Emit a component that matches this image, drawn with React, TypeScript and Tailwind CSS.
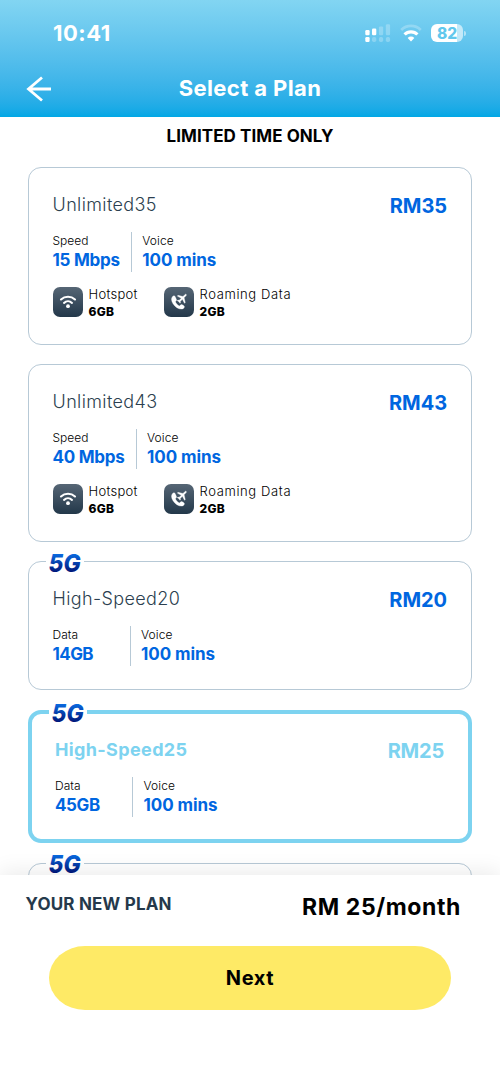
import clsx from "clsx";

interface Stat {
  label: string;
  value: string;
  spacing: string;
}

interface Plan {
  name: string;
  price: string;
  stat: Stat;
  is5G?: boolean;
  selected?: boolean;
  addOns?: boolean;
}

const plans: Plan[] = [
  {
    name: "Unlimited35",
    price: "RM35",
    stat: { label: "Speed", value: "15 Mbps", spacing: "tracking-[-0.25px]" },
    addOns: true,
  },
  {
    name: "Unlimited43",
    price: "RM43",
    stat: { label: "Speed", value: "40 Mbps", spacing: "tracking-[-0.25px]" },
    addOns: true,
  },
  {
    name: "High-Speed20",
    price: "RM20",
    stat: { label: "Data", value: "14GB", spacing: "tracking-[-0.6px]" },
    is5G: true,
  },
  {
    name: "High-Speed25",
    price: "RM25",
    stat: { label: "Data", value: "45GB", spacing: "tracking-[-0.4px]" },
    is5G: true,
    selected: true,
  },
];

function SignalIcon() {
  return (
    <svg width="26" height="18" viewBox="0 0 26 18" fill="white">
      <rect x="0.3" y="6" width="4.3" height="5.2" rx="1.2" />
      <rect x="7" y="4.6" width="4.3" height="6.6" rx="1.2" />
      <rect x="13.9" y="2.4" width="4.3" height="8.8" rx="1.2" opacity="0.25" />
      <rect x="20.8" y="0.2" width="4.3" height="11" rx="1.2" opacity="0.25" />
      <rect x="0.3" y="13" width="4.3" height="5" rx="1.2" />
      <rect x="7" y="13" width="4.3" height="5" rx="1.8" opacity="0.25" />
      <rect x="13.9" y="13" width="4.3" height="5" rx="1.8" opacity="0.25" />
      <rect x="20.8" y="13" width="4.3" height="5" rx="1.8" opacity="0.25" />
    </svg>
  );
}

function StatusWifiIcon() {
  return (
    <svg width="22" height="18" viewBox="0 0 22 18" fill="none" stroke="white">
      <path d="M1.2 6a13.8 13.8 0 0 1 19.6 0" strokeWidth="2.7" opacity="0.25" />
      <path d="M4.6 10.5a8.9 8.9 0 0 1 12.8 0" strokeWidth="3.2" />
      <path d="M11 17.4l-3.3-3.4a4.6 4.6 0 0 1 6.6 0z" fill="white" stroke="none" />
    </svg>
  );
}

function Battery() {
  return (
    <div className="flex items-center">
      <div className="flex h-[18px] w-8 items-center justify-center rounded-[6px] bg-linear-to-r from-white from-[82%] to-white/60 to-[82%] pt-px text-[15.5px] leading-none font-extrabold text-[#62c8ed]">
        82
      </div>
      <div className="ml-px h-[5px] w-[2px] rounded-r-full bg-white/50" />
    </div>
  );
}

function Logo5G() {
  return (
    <svg width="36" height="22" viewBox="0 0 36 22" overflow="visible">
      <defs>
        <linearGradient id="logo5g" x1="0" y1="0" x2="0" y2="1">
          <stop offset="0.2" stopColor="#0a6ae0" />
          <stop offset="0.78" stopColor="#001a7d" />
        </linearGradient>
      </defs>
      <text
        x="0.6"
        y="20"
        textLength="32"
        lengthAdjust="spacingAndGlyphs"
        fill="url(#logo5g)"
        className="text-[25px] font-extrabold italic"
      >
        5G
      </text>
    </svg>
  );
}

function HotspotIcon() {
  return (
    <svg width="18" height="14" viewBox="0 0 18 14" fill="none" stroke="white" strokeWidth="2.1" strokeLinecap="round">
      <path d="M2 4.5a10.2 10.2 0 0 1 14 0" />
      <path d="M5 7.9a5.8 5.8 0 0 1 8 0" />
      <circle cx="9" cy="11.2" r="1.9" fill="white" stroke="none" />
    </svg>
  );
}

// handset with a small plane over its upper right corner
function RoamingIcon() {
  return (
    <svg width="18" height="18" viewBox="0 0 18 18" fill="white" stroke="white" strokeLinejoin="round">
      <path
        d="M5 3.3C4.3 2.4 3.4 2.6 2.6 3.4 1 5 1.1 7.6 3 10.7c2.300 3.500 5.600 5.600 8.600 5.400 1.500-.1 2.600-1 2.800-2.100.1-.7-.2-1.100-.8-1.500l-1.700-.9c-.6-.3-1.100-.1-1.500.4l-.8 1C7.700 12.300 6.200 10.700 5.400 8.800l.9-1c.4-.5.4-.9.1-1.500z"
        strokeWidth="0.3"
      />
      <g transform="translate(12.400 5.200) rotate(45) scale(0.54) translate(-11.500 -12)">
        <path
          d="M21 16v-2l-8-5V3.500c0-.83-.67-1.500-1.500-1.500S10 2.670 10 3.500V9l-8 5v2l8-2.500V19l-2 1.500V22l3.500-1 3.500 1v-1.500L13 19v-5.500l8 2.500z"
          strokeWidth="0.6"
        />
      </g>
    </svg>
  );
}

function AddOn({ icon, label, value }: { icon: React.ReactNode; label: string; value: string }) {
  return (
    <div className="flex items-center gap-[6px]">
      <div className="flex size-[30px] items-center justify-center rounded-[7px] bg-linear-to-b from-[#566675] to-[#23384a]">
        {icon}
      </div>
      <div className="pt-[2px]">
        <p className="text-[13px] leading-[18px] font-light">{label}</p>
        <p className="text-[12px] leading-[18px] font-extrabold tracking-[0.3px]">{value}</p>
      </div>
    </div>
  );
}

function PlanCard({ plan }: { plan: Plan }) {
  const { name, price, stat, is5G, selected, addOns } = plan;

  return (
    <div
      className={clsx(
        "relative shrink-0 rounded-[13px] pr-6",
        selected
          ? "mt-px h-[133px] border-4 border-[#7dd3f0] pt-[21px] pl-[23px]"
          : "border border-[#b7c9d6] pt-[22px] pl-[23.5px]",
        !selected && (addOns ? "h-[178px]" : "h-[129px]"),
      )}
    >
      {is5G && (
        <div className={clsx("absolute left-[17px] bg-white pl-[2px]", selected ? "-top-[12px]" : "-top-[10px]")}>
          <Logo5G />
        </div>
      )}
      <div className="flex h-[31px] justify-between">
        <h2
          className={clsx(
            "pt-px text-[18px] leading-7",
            selected
              ? "font-bold tracking-[0.36px] text-[#7dd3f0]"
              : "font-light tracking-[0.38px] text-[#2c3f50]",
          )}
        >
          {name}
        </h2>
        <p
          className={clsx(
            "pt-[2px] text-[20px] leading-7 font-bold",
            selected ? "tracking-[-0.2px] text-[#7dd3f0]" : "tracking-[-0.05px] text-[#0066e0]",
          )}
        >
          {price}
        </p>
      </div>
      <div className="mt-[11px] flex h-10">
        <div className="min-w-[78px] border-r border-[#b7c9d6] pr-[11px]">
          <p className="text-[12px] leading-[17px] font-light">{stat.label}</p>
          <p className={clsx("text-[17px] leading-[22px] font-bold text-[#0066e0]", stat.spacing)}>{stat.value}</p>
        </div>
        <div className="pl-[10.5px]">
          <p className="text-[12px] leading-[17px] font-light tracking-[0.1px]">Voice</p>
          <p className="text-[17px] leading-[22px] font-bold tracking-[-0.07px] text-[#0066e0]">100 mins</p>
        </div>
      </div>
      {addOns && (
        <div className="mt-[11px] flex">
          <div className="w-[111px] tracking-[0.3px]">
            <AddOn icon={<HotspotIcon />} label="Hotspot" value="6GB" />
          </div>
          <div className="tracking-[0.63px]">
            <AddOn icon={<RoamingIcon />} label="Roaming Data" value="2GB" />
          </div>
        </div>
      )}
    </div>
  );
}

export default function App() {
  return (
    <div className="flex h-[1082px] w-[500px] flex-col overflow-hidden bg-white font-['Inter','Liberation_Sans',sans-serif] text-black">
      <header className="h-[117px] shrink-0 bg-linear-to-b from-[#82d5f2] to-[#00a7e5] text-white">
        <div className="flex h-[66px] items-center justify-between pr-[34px] pl-[53px]">
          <span className="text-[22px] leading-none font-bold tracking-[0.5px]">10:41</span>
          <div className="flex items-center gap-[9px]">
            <SignalIcon />
            <StatusWifiIcon />
            <Battery />
          </div>
        </div>
        <div className="grid h-[45px] grid-cols-[52px_1fr_52px] items-center">
          <button aria-label="Back" className="pl-[26px]">
            <svg width="26" height="26" viewBox="0 0 26 26" fill="none" stroke="white" strokeWidth="2.8">
              <path d="M25 13H2.5M16 1.5L2.5 13L16 24.5" />
            </svg>
          </button>
          <h1 className="text-center text-[22px] font-bold tracking-[0.4px]">Select a Plan</h1>
        </div>
      </header>

      <main className="flex h-[758px] shrink-0 flex-col overflow-hidden px-[28px]">
        <p className="mt-2 h-[42px] shrink-0 text-center text-[17px] leading-[22px] font-bold tracking-[0.07px]">
          LIMITED TIME ONLY
        </p>
        <div className="flex flex-col gap-[19px]">
          {plans.map((plan) => (
            <PlanCard key={plan.name} plan={plan} />
          ))}
          {/* top edge of the next card, peeking out above the footer */}
          <div className="relative mt-[1px] h-[60px] shrink-0 rounded-[13px] border border-[#b7c9d6]">
            <div className="absolute -top-[11px] left-[17px] bg-white pl-[2px]">
              <Logo5G />
            </div>
          </div>
        </div>
      </main>

      <footer className="relative h-[207px] shrink-0 bg-white shadow-[0_-4px_20px_rgba(0,0,0,0.08)]">
        <div className="flex justify-between pr-[39px] pl-[25.5px]">
          <span className="pt-[17px] text-[17px] leading-[24px] font-bold tracking-[0.2px] text-[#25394b]">
            YOUR NEW PLAN
          </span>
          <span className="pt-4 text-[23px] leading-[32px] font-bold tracking-[0.6px]">RM 25/month</span>
        </div>
        <button className="mx-auto mt-[23px] block h-16 w-[402px] rounded-[36px/32px] bg-[#feea66] text-[20px] font-bold tracking-[0.6px]">
          Next
        </button>
      </footer>
    </div>
  );
}
